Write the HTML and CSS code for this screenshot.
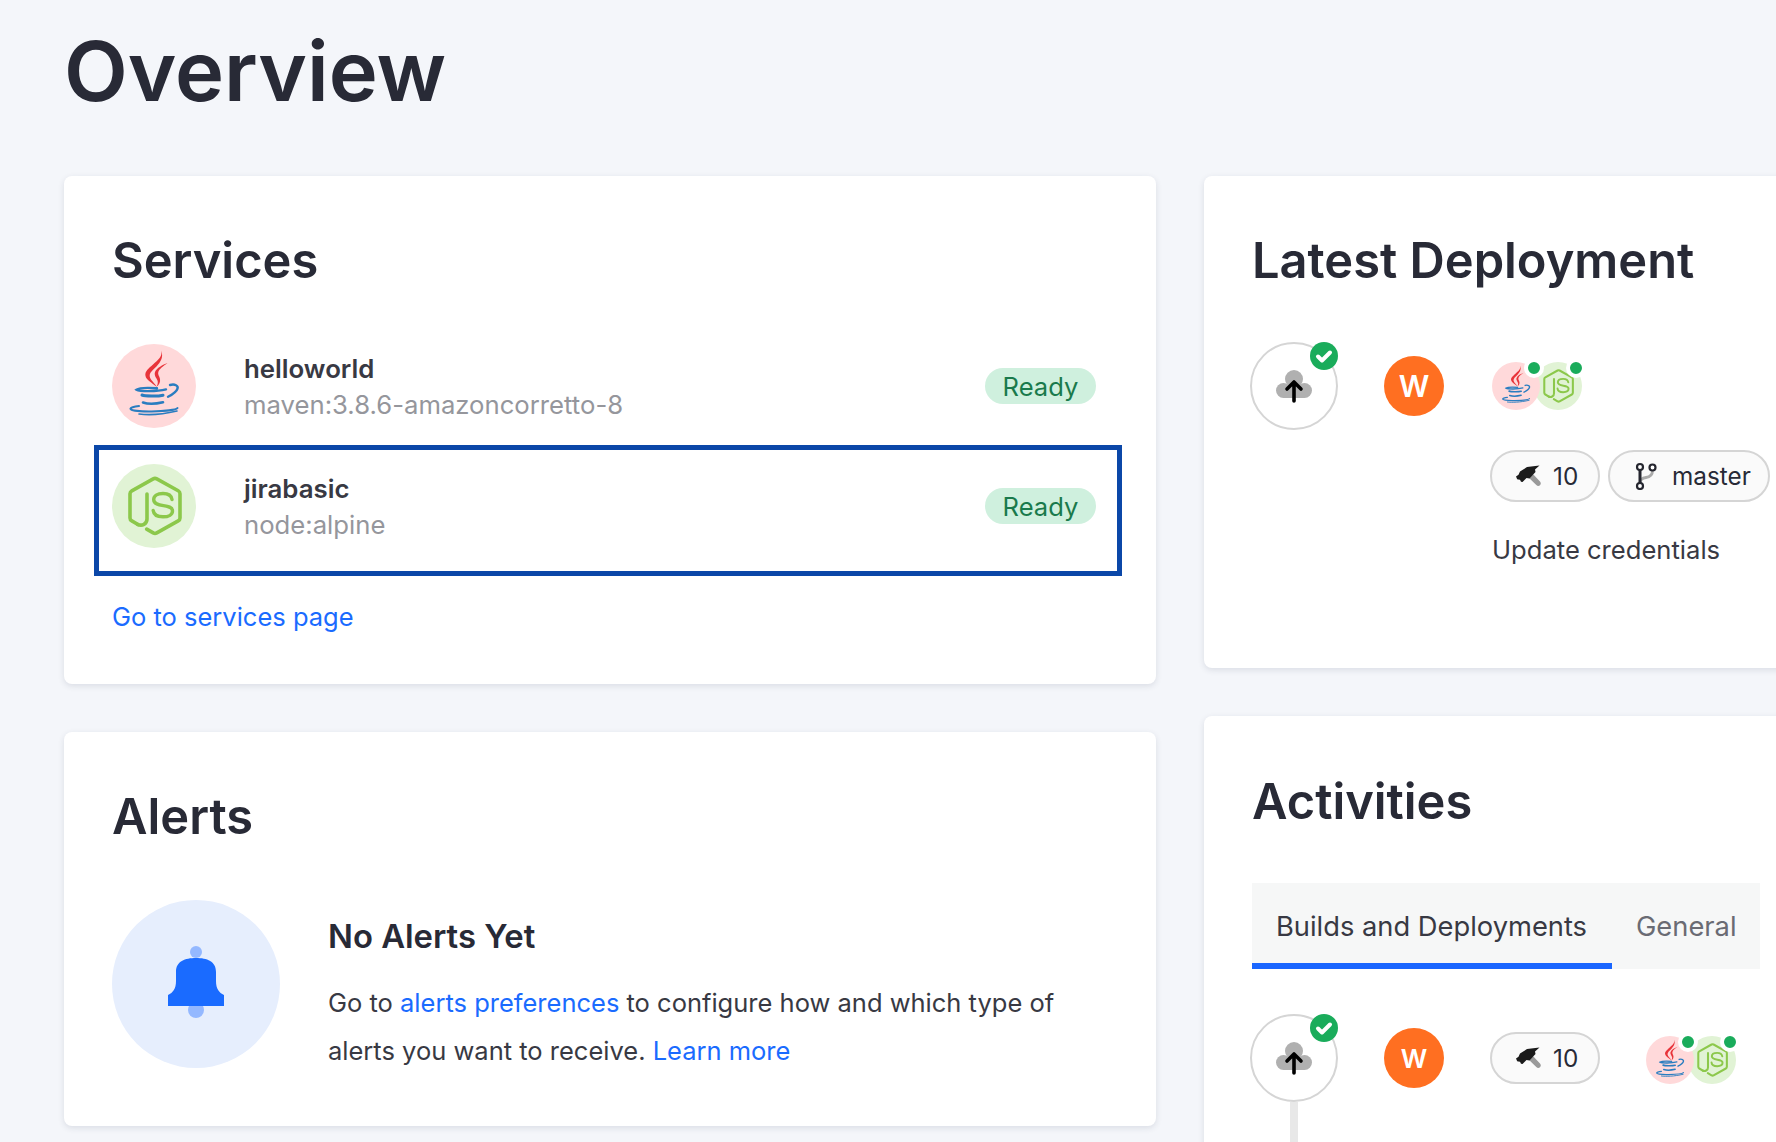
FILE: index.html
```html
<!DOCTYPE html>
<html lang="en">
<head>
<meta charset="utf-8">
<title>Overview</title>
<link rel="stylesheet" href="styles.css">
</head>
<body>
<svg class="defs" width="0" height="0" aria-hidden="true">
  <defs>
    <symbol id="java" viewBox="0 0 84 84">
      <path fill="#e8343a" d="M49 6.500c2 5.500-3 9.500-8 14-4.500 4-8.500 7-7.500 11.500.8 3.800 6 6.500 11.500 11-2-3.800-7-7.300-7.300-10.800-.3-3.800 3.500-6.500 7-10C48.500 18 52 13 49 6.500z"/>
      <path fill="#e8343a" d="M55.500 19c-4.700 1.700-11 5-12.500 9-1.500 4 2.800 7 2.800 10 0 2-.6 3.500-1.300 4.800 2.800-1.800 4-4.800 3.500-7.800-.5-2.700-2.500-4.500-1.700-7 .8-3 5-6 9.200-9z"/>
      <g fill="none" stroke="#2a7dc0" stroke-linecap="round">
        <path stroke-width="2.400" d="M45 44.300c-8-.6-18-.4-20.500 1.400 3 1.800 20 2.200 29.500-.3"/>
        <path stroke-width="2.400" d="M58 41c5-1.300 8.500.7 7.500 3.600-.9 3-4.700 5.700-9.500 8.200"/>
        <path stroke-width="3" d="M30 51c3 1.300 16 1.500 21 .2"/>
        <path stroke-width="2.600" d="M31 58.500c4 1.400 13 1.400 20-.2"/>
        <path stroke-width="2" d="M27 62c-5 .6-9 1.800-8.500 2.900 .6 1.500 9 2.800 21 2.600 13-.2 25-1.700 26-3.500"/>
        <path stroke-width="1.600" d="M27 70c8 1 22 .8 38-3"/>
      </g>
    </symbol>
    <symbol id="node" viewBox="0 0 84 84">
      <path fill="none" stroke="#8cc84b" stroke-width="3.600" stroke-linejoin="round" stroke-linecap="round" d="M26 60.500l-6.200-3.600c-1.100-.6-1.800-1.700-1.800-3V29.800c0-1.300.7-2.400 1.800-3L41.200 14.900c1.100-.6 2.500-.6 3.600 0L66.200 26.800c1.100.6 1.800 1.700 1.800 3v24.100c0 1.300-.7 2.400-1.800 3L44.800 68.900c-1.100.6-2.500.6-3.600 0l-6.500-3.800"/>
      <path fill="none" stroke="#8cc84b" stroke-width="3.600" stroke-linecap="round" d="M35 30v25c0 5-5 7.500-9.500 5.300"/>
      <path fill="none" stroke="#8cc84b" stroke-width="3.400" stroke-linecap="round" d="M60 35.500c-.6-4-4-6-9-6-5.800 0-9.300 2.300-9.300 6 0 8.800 18.800 3.500 18.800 11.400 0 3.600-3.800 5.900-9.500 5.900-5.300 0-9.300-2.100-9.800-6.300"/>
    </symbol>
    <symbol id="cloud" viewBox="0 0 40 40">
      <g fill="#b0b0b0">
        <circle cx="20" cy="13" r="9"/>
        <circle cx="9.500" cy="24.500" r="7.500"/>
        <circle cx="30.500" cy="24.500" r="7.500"/>
        <rect x="9.500" y="19" width="21" height="13"/>
      </g>
      <path fill="none" stroke="#000" stroke-width="3.600" stroke-linecap="round" stroke-linejoin="round" d="M20 35V17M13 23l7-7 7 7"/>
    </symbol>
    <symbol id="hammer" viewBox="0 0 28 28">
      <path fill="#9a9a9a" d="M13 14l4-4 9 9.500c1.100 1.200 1.100 2.700 0 3.700-1.100 1-2.600.9-3.700-.2z"/>
      <path fill="#1b1b1b" d="M2 14.500l2.500-1.700 1.500-3.300L13 5l12.500-1.500-4.500 4 .5 2.500-6 6.500-3-.5-4 4-1.500-.3-1-2-1.800-.2-1-.3z"/>
    </symbol>
    <symbol id="branch" viewBox="0 0 28 28">
      <path fill="none" stroke="#aaa" stroke-width="2.800" d="M8 21c0-3.500 2-5 6-5.500 4.500-.6 6.500-2.500 6.500-7"/>
      <path fill="none" stroke="#25262f" stroke-width="3" d="M8 7v15"/>
      <circle cx="8" cy="5" r="3" fill="#fff" stroke="#25262f" stroke-width="2.200"/>
      <circle cx="8" cy="24" r="3" fill="#fff" stroke="#25262f" stroke-width="2.200"/>
      <circle cx="20.500" cy="5.500" r="3" fill="#fff" stroke="#25262f" stroke-width="2.200"/>
    </symbol>
  </defs>
</svg>
<main class="page">
  <h1 class="page-title">Overview</h1>
  <div class="columns">
    <div class="col-left">
      <section class="card card-services">
        <h2 class="card-title">Services</h2>
        <ul class="service-list">
          <li class="service">
            <span class="logo logo-java"><svg class="logo-svg"><use href="#java"/></svg></span>
            <div class="service-text">
              <div class="service-name">helloworld</div>
              <div class="service-image">maven:3.8.6-amazoncorretto-8</div>
            </div>
            <span class="status">Ready</span>
          </li>
          <li class="service service-focus">
            <span class="logo logo-node"><svg class="logo-svg"><use href="#node"/></svg></span>
            <div class="service-text">
              <div class="service-name">jirabasic</div>
              <div class="service-image">node:alpine</div>
            </div>
            <span class="status">Ready</span>
          </li>
        </ul>
        <a class="link services-link" href="#">Go to services page</a>
      </section>
      <section class="card card-alerts">
        <h2 class="card-title">Alerts</h2>
        <div class="alert-empty">
          <div class="bell-disc">
            <svg class="bell" viewBox="0 0 56 72">
              <circle cx="28" cy="6" r="6" fill="#94b8ff"/>
              <circle cx="28" cy="64" r="8" fill="#94b8ff"/>
              <path fill="#1a6bff" d="M0 60V49c5-2.500 8-6 8-14V26C8 15 17 12 28 12s20 3 20 14v9c0 8 3 11.500 8 14v11z"/>
            </svg>
          </div>
          <div class="alert-text">
            <h3 class="alert-title">No Alerts Yet</h3>
            <p class="alert-copy">Go to <a class="link" href="#">alerts preferences</a> to configure how and which type of alerts you want to receive. <a class="link" href="#">Learn more</a></p>
          </div>
        </div>
      </section>
    </div>
    <div class="col-right">
      <section class="card card-latest">
        <h2 class="card-title">Latest Deployment</h2>
        <div class="deploy">
          <div class="ring">
            <svg class="cloud"><use href="#cloud"/></svg>
            <span class="check"><svg viewBox="0 0 28 28"><path fill="none" stroke="#fff" stroke-width="4" stroke-linecap="round" stroke-linejoin="round" d="M8 14.500l4 4 8-8"/></svg></span>
          </div>
          <span class="avatar avatar-lg">W</span>
          <div class="deploy-info">
            <div class="stack">
              <span class="mini mini-java"><svg class="mini-svg"><use href="#java"/></svg><i class="dot"></i></span>
              <span class="mini mini-node"><svg class="mini-svg"><use href="#node"/></svg><i class="dot"></i></span>
            </div>
            <div class="pills">
              <span class="pill"><svg class="pill-icon"><use href="#hammer"/></svg>10</span>
              <span class="pill pill-branch"><svg class="pill-icon"><use href="#branch"/></svg>master</span>
            </div>
            <p class="deploy-msg">Update credentials</p>
          </div>
        </div>
      </section>
      <section class="card card-activities">
        <h2 class="card-title">Activities</h2>
        <div class="tabs">
          <span class="tab tab-active">Builds and Deployments</span>
          <span class="tab">General</span>
        </div>
        <div class="activity">
          <div class="ring-col">
            <div class="ring">
              <svg class="cloud"><use href="#cloud"/></svg>
              <span class="check"><svg viewBox="0 0 28 28"><path fill="none" stroke="#fff" stroke-width="4" stroke-linecap="round" stroke-linejoin="round" d="M8 14.500l4 4 8-8"/></svg></span>
            </div>
            <span class="connector"></span>
          </div>
          <span class="avatar avatar-sm">W</span>
          <span class="pill"><svg class="pill-icon"><use href="#hammer"/></svg>10</span>
          <div class="stack stack-activity">
            <span class="mini mini-java"><svg class="mini-svg"><use href="#java"/></svg><i class="dot"></i></span>
            <span class="mini mini-node"><svg class="mini-svg"><use href="#node"/></svg><i class="dot"></i></span>
          </div>
        </div>
      </section>
    </div>
  </div>
</main>
</body>
</html>
```
FILE: styles.css
```css
* { box-sizing: border-box; }
html, body { margin: 0; height: 1142px; overflow: hidden; }
body { background: #f4f6fa; font-family: Inter, "Liberation Sans", sans-serif; color: #282a36; }
.defs { position: absolute; }
h1, h2, h3, p, ul { margin: 0; padding: 0; }
ul { list-style: none; }
.page { width: 1776px; height: 1142px; overflow: hidden; padding: 0 0 0 64px; }
.page-title { height: 176px; padding-top: 21px; font-size: 83px; line-height: 100px; font-weight: 600; }
.columns { display: flex; gap: 48px; align-items: flex-start; }
.col-left { width: 1092px; flex: none; display: flex; flex-direction: column; gap: 48px; }
.col-right { width: 600px; flex: none; display: flex; flex-direction: column; gap: 48px; }
.card { background: #fff; border-radius: 8px; box-shadow: 0 2px 6px rgba(30, 40, 70, 0.12); padding: 51px 48px 48px; }
.card-title { font-size: 48.8px; line-height: 68px; font-weight: 600; }
.card-services { height: 508px; }
.service-list { margin-top: 35px; }
.service { display: flex; height: 120px; margin: 0 -9px 0 -13px; padding: 14px 21px 0 13px; }
.service-focus { height: 121px; outline: 5px solid #0b47a8; }
.logo { width: 84px; height: 84px; flex: none; border-radius: 50%; display: flex; }
.logo-java { background: #ffd9da; }
.logo-node { background: #e1f3d5; }
.logo-svg { width: 84px; height: 84px; }
.service-text { flex: 1; margin-left: 48px; padding-top: 7px; }
.service-name { font-size: 25.8px; line-height: 36px; font-weight: 600; color: #383943; }
.service-image { font-size: 25.7px; line-height: 36px; color: #95969c; }
.status { margin-top: 24px; height: 36px; width: 111px; border-radius: 18px; background: #cff0de; color: #1a7a4c; font-size: 25.6px; line-height: 38px; text-align: center; }
.link { color: #1a6bff; text-decoration: none; }
.services-link { display: block; margin-top: 28px; font-size: 25.5px; line-height: 36px; }
.card-alerts { height: 394px; }
.alert-empty { display: flex; margin-top: 49px; gap: 48px; }
.bell-disc { width: 168px; height: 168px; flex: none; border-radius: 50%; background: #e6eefd; display: flex; align-items: center; justify-content: center; }
.bell { width: 56px; height: 72px; margin-bottom: 4px; }
.alert-title { font-size: 32.8px; line-height: 42px; font-weight: 600; margin-top: 15px; }
.alert-copy { margin-top: 22px; font-size: 25.5px; line-height: 48px; color: #383943; }
.card-latest { height: 492px; }
.deploy { display: flex; margin-top: 47px; margin-left: -2px; }
.ring { position: relative; width: 88px; height: 88px; flex: none; border: 2px solid #d5d5d5; border-radius: 50%; display: flex; align-items: center; justify-content: center; background: #fff; }
.cloud { width: 40px; height: 40px; }
.check { position: absolute; top: -2px; right: -2px; width: 28px; height: 28px; border-radius: 50%; background: #1aac5b; display: flex; }
.check svg { width: 28px; height: 28px; }
.avatar { flex: none; width: 60px; height: 60px; border-radius: 50%; background: #ff6f21; color: #fff; display: flex; align-items: center; justify-content: center; font-weight: 600; }
.avatar-lg { font-size: 30px; margin: 14px 0 0 46px; }
.avatar-sm { font-size: 26px; margin: 14px 0 0 46px; }
.deploy-info { margin-left: 46px; }
.stack { display: flex; margin-top: 20px; margin-left: 2px; }
.mini { position: relative; width: 48px; height: 48px; border-radius: 50%; display: flex; flex: none; }
.mini-java { background: #ffd9da; z-index: 1; }
.mini-node { background: #e1f3d5; margin-left: -6px; }
.mini-svg { width: 48px; height: 48px; }
.dot { position: absolute; top: -4px; right: -4px; width: 20px; height: 20px; border-radius: 50%; background: #1aac5b; border: 4px solid #fff; }
.pills { display: flex; gap: 8px; margin-top: 40px; }
.pill { flex: none; display: flex; align-items: center; gap: 11px; width: 110px; height: 52px; padding-left: 22px; border: 2px solid #d5d5d5; border-radius: 26px; background: #fafafa; font-size: 24.3px; }
.pill-branch { width: 162px; gap: 12px; padding-left: 22px; }
.pill-icon { width: 28px; height: 28px; flex: none; }
.deploy-msg { margin-top: 30px; margin-left: 2px; font-size: 25.6px; line-height: 36px; color: #383943; }
.card-activities { height: 600px; padding-top: 52px; }
.tabs { display: flex; margin-top: 47px; width: 508px; height: 86px; background: #f6f7f7; }
.tab { padding: 1px 21px 0 24px; font-size: 27.3px; line-height: 86px; color: #6a6b73; }
.tab-active { width: 360px; flex: none; padding-right: 0; color: #383943; border-bottom: 6px solid #1a66ff; }
.activity { display: flex; margin-top: 45px; margin-left: -2px; align-items: flex-start; }
.ring-col { width: 88px; flex: none; display: flex; flex-direction: column; align-items: center; }
.connector { width: 8px; height: 60px; background: #e8e8e8; }
.activity .pill { margin: 18px 0 0 46px; }
.stack-activity { margin: 22px 0 0 46px; }
```
